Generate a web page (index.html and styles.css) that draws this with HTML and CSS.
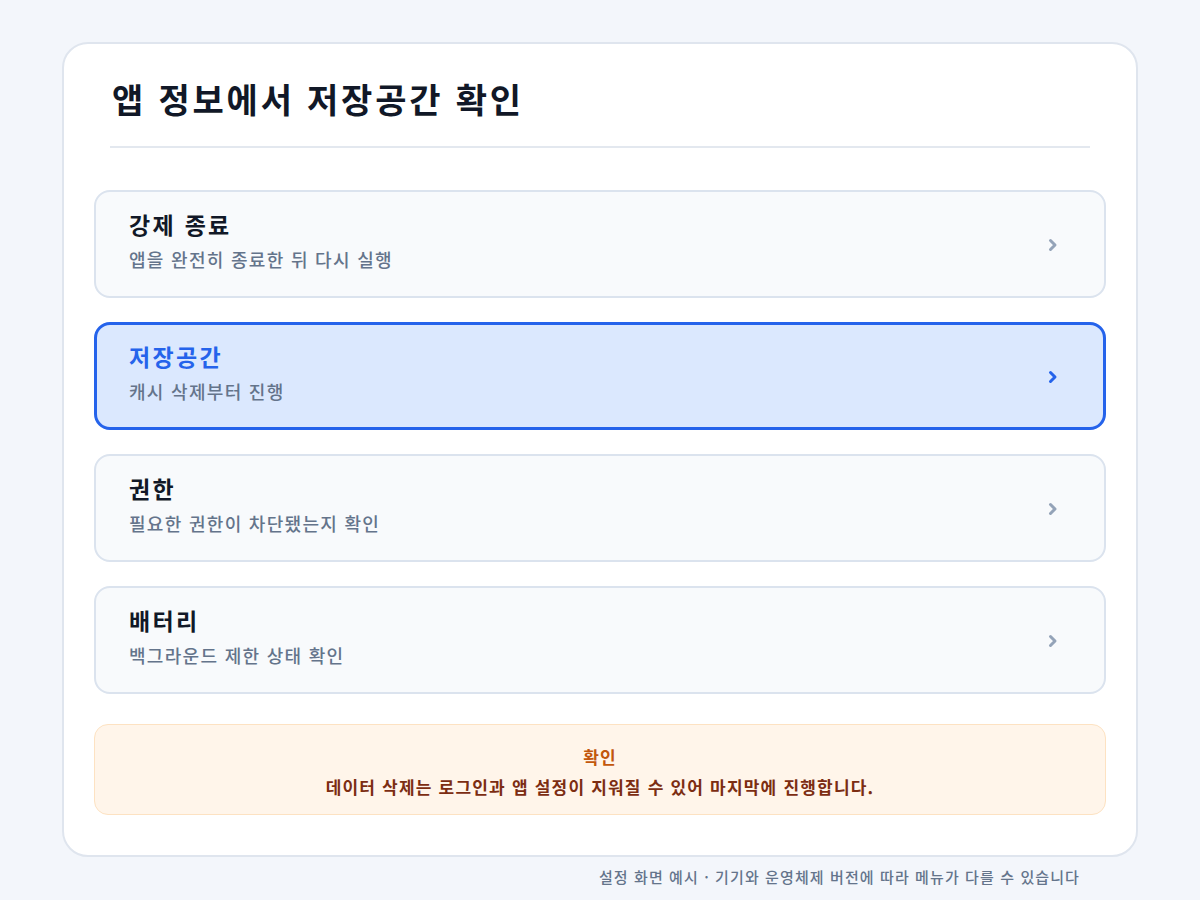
FILE: index.html
```html
<!DOCTYPE html>
<html lang="ko">
<head>
  <meta charset="UTF-8" />
  <title>앱 정보에서 저장공간 확인</title>
  <link rel="stylesheet" href="styles.css">
</head>
<body>
  <div class="panel">
    <div class="panel-head">
      <h1>앱 정보에서 저장공간 확인</h1>
    </div>

    <!-- settings rows -->
    <ul class="options">
      <li class="option">
        <div class="option-text">
          <div class="option-title">강제 종료</div>
          <div class="option-desc">앱을 완전히 종료한 뒤 다시 실행</div>
        </div>
        <svg class="chevron" viewBox="0 0 10 14" width="10" height="14"><polyline points="2.5,2.5 7,7 2.5,11.5" /></svg>
      </li>
      <li class="option active">
        <div class="option-text">
          <div class="option-title">저장공간</div>
          <div class="option-desc">캐시 삭제부터 진행</div>
        </div>
        <svg class="chevron" viewBox="0 0 10 14" width="10" height="14"><polyline points="2.5,2.5 7,7 2.5,11.5" /></svg>
      </li>
      <li class="option">
        <div class="option-text">
          <div class="option-title">권한</div>
          <div class="option-desc">필요한 권한이 차단됐는지 확인</div>
        </div>
        <svg class="chevron" viewBox="0 0 10 14" width="10" height="14"><polyline points="2.5,2.5 7,7 2.5,11.5" /></svg>
      </li>
      <li class="option">
        <div class="option-text">
          <div class="option-title">배터리</div>
          <div class="option-desc">백그라운드 제한 상태 확인</div>
        </div>
        <svg class="chevron" viewBox="0 0 10 14" width="10" height="14"><polyline points="2.5,2.5 7,7 2.5,11.5" /></svg>
      </li>
    </ul>

    <div class="notice">
      <div class="notice-title">확인</div>
      <div class="notice-text">데이터 삭제는 로그인과 앱 설정이 지워질 수 있어 마지막에 진행합니다.</div>
    </div>
  </div>

  <p class="footnote">설정 화면 예시 · 기기와 운영체제 버전에 따라 메뉴가 다를 수 있습니다</p>
</body>
</html>
```

FILE: styles.css
```css
body {
  margin: 0;
  background: #f3f6fb;
  font-family: "Noto Sans CJK KR", "Noto Sans", sans-serif;
  color: #111827;
  padding-top: 42px;
}

.panel {
  width: 1076px;
  box-sizing: border-box;
  margin: 0 auto;
  background: #fff;
  border: 2px solid #dfe5ee;
  border-radius: 26px;
  padding: 31px 30px 40px;
}

.panel-head {
  padding: 0 0 23px;
  border-bottom: 2px solid #e3e8ef;
  margin: 0 16px;
}

.panel-head h1 {
  margin: 0;
  font-size: 34px;
  line-height: 48px;
  font-weight: 700;
  letter-spacing: 2.8px;
  color: #111827;
  padding-left: 2px;
}

.options {
  list-style: none;
  margin: 42px 0 0;
  padding: 0;
  display: flex;
  flex-direction: column;
  gap: 24px;
}

.option {
  display: flex;
  align-items: center;
  justify-content: space-between;
  background: #f8fafc;
  border: 2px solid #dbe3ee;
  border-radius: 16px;
  padding: 18px 46px 24px 33px;
}

.option-title {
  font-size: 23px;
  line-height: 28px;
  font-weight: 700;
  letter-spacing: 2.3px;
  color: #111827;
}

.option-desc {
  margin-top: 8px;
  font-size: 18px;
  line-height: 26px;
  font-weight: 500;
  letter-spacing: 1.3px;
  color: #64748b;
}

.chevron {
  margin-top: 8px;
  fill: none;
  stroke: #94a3b8;
  stroke-width: 3;
  stroke-linecap: round;
  stroke-linejoin: round;
}

.option.active {
  background: #dbe8fe;
  border: 3px solid #2563eb;
  padding: 17px 45px 23px 32px;
}

.option.active .option-title {
  color: #2563eb;
}

.option.active .chevron {
  stroke: #2563eb;
}

.notice {
  margin-top: 30px;
  background: #fff5ea;
  border: 1px solid #fde2c2;
  border-radius: 14px;
  padding: 19px 20px 14px;
  text-align: center;
}

.notice-title {
  font-size: 17px;
  line-height: 26px;
  font-weight: 700;
  letter-spacing: 1.2px;
  color: #c2570c;
}

.notice-text {
  margin-top: 4px;
  font-size: 17px;
  line-height: 26px;
  font-weight: 700;
  letter-spacing: 1.2px;
  color: #7c2d12;
}

.footnote {
  margin: 10px 0 0;
  padding-right: 120px;
  text-align: right;
  font-size: 15px;
  line-height: 20px;
  font-weight: 500;
  letter-spacing: 1.1px;
  color: #64748b;
}
```
